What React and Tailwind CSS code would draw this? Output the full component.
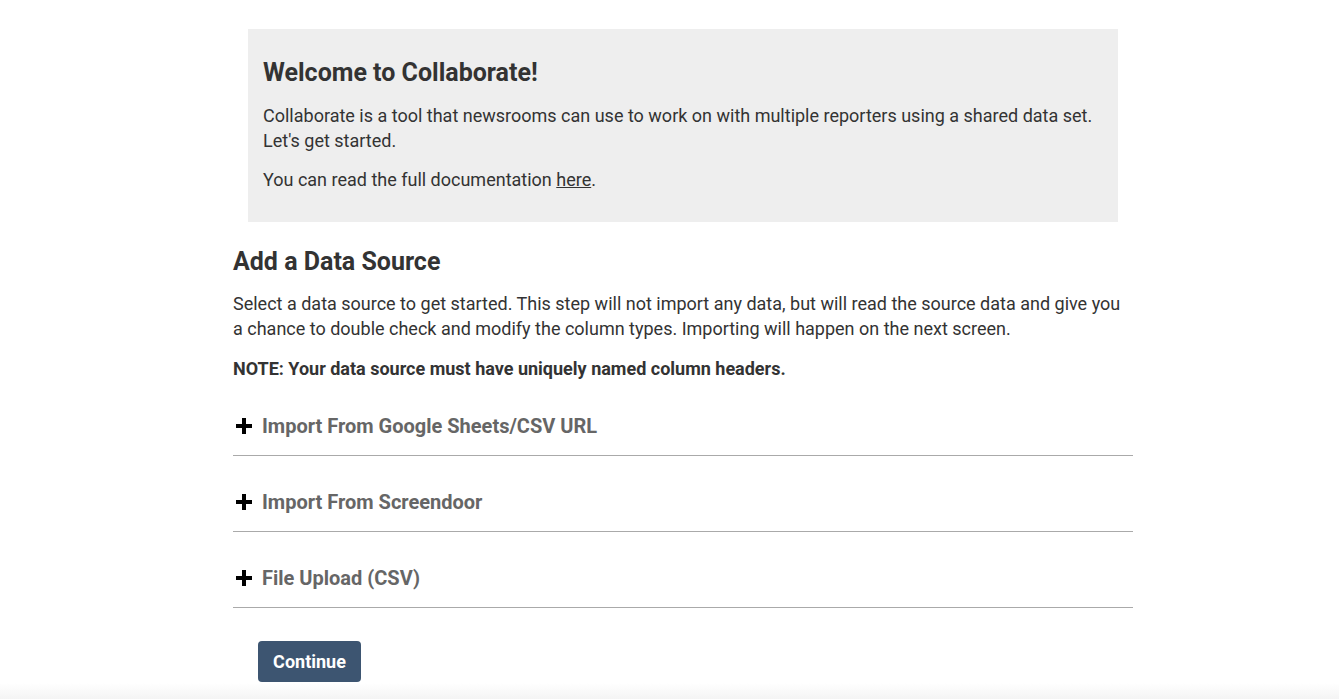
import React from 'react';

const sources = [
    'Import From Google Sheets/CSV URL',
    'Import From Screendoor',
    'File Upload (CSV)',
];

const PlusIcon = () => (
    <svg width="18" height="18" viewBox="0 0 18 18" className="shrink-0">
        <rect x="7" y="1" width="4" height="16" fill="#000" />
        <rect x="1" y="7" width="16" height="4" fill="#000" />
    </svg>
);

const App = () => {
    return (
        <div
            className="min-h-[699px] bg-white text-[#333] relative"
            style={{ fontFamily: 'Roboto, "Liberation Sans", sans-serif' }}
        >
            <div className="ml-[233px] w-[900px] pt-[29px] pb-[17px]">
                {/* Welcome box */}
                <div className="mx-[15px] bg-[#eeeeee] px-[15px] pt-[29px] pb-[30px]">
                    <h1 className="text-[25px] leading-[30px] font-bold mb-[15px]">
                        Welcome to Collaborate!
                    </h1>
                    <p className="text-[18px] leading-[25px] mb-[14px]">
                        Collaborate is a tool that newsrooms can use to work on with multiple reporters using a shared data set. Let's get started.
                    </p>
                    <p className="text-[18px] leading-[25px]">
                        You can read the full documentation{' '}
                        <a href="#" className="underline text-[#333]">here</a>.
                    </p>
                </div>

                {/* Data source */}
                <h2 className="text-[25px] leading-[30px] font-bold mt-[25px] mb-[14px]">
                    Add a Data Source
                </h2>
                <p className="text-[18px] leading-[25px] mb-[16px]">
                    Select a data source to get started. This step will not import any data, but will read the source data and give you a chance to double check and modify the column types. Importing will happen on the next screen.
                </p>
                <p className="text-[18px] leading-[24px] font-bold">
                    NOTE: Your data source must have uniquely named column headers.
                </p>

                <div className="-mt-px">
                    {sources.map((s) => (
                        <div key={s} className="pt-[32px] pb-[15px] border-b border-[#aaaaaa]">
                            <button className="flex items-center gap-[9px] pl-[2px] text-[20px] leading-[28px] font-bold text-[#666]">
                                <PlusIcon />
                                {s}
                            </button>
                        </div>
                    ))}
                </div>

                <button className="mt-[33px] ml-[25px] w-[103px] h-[41px] rounded-[4px] bg-[#3d5571] text-white text-[18px] font-bold">
                    Continue
                </button>
            </div>
            <div className="absolute left-0 right-0 bottom-0 h-[16px] bg-gradient-to-b from-transparent to-[#f4f4f4]" />
        </div>
    );
};

export default App;
